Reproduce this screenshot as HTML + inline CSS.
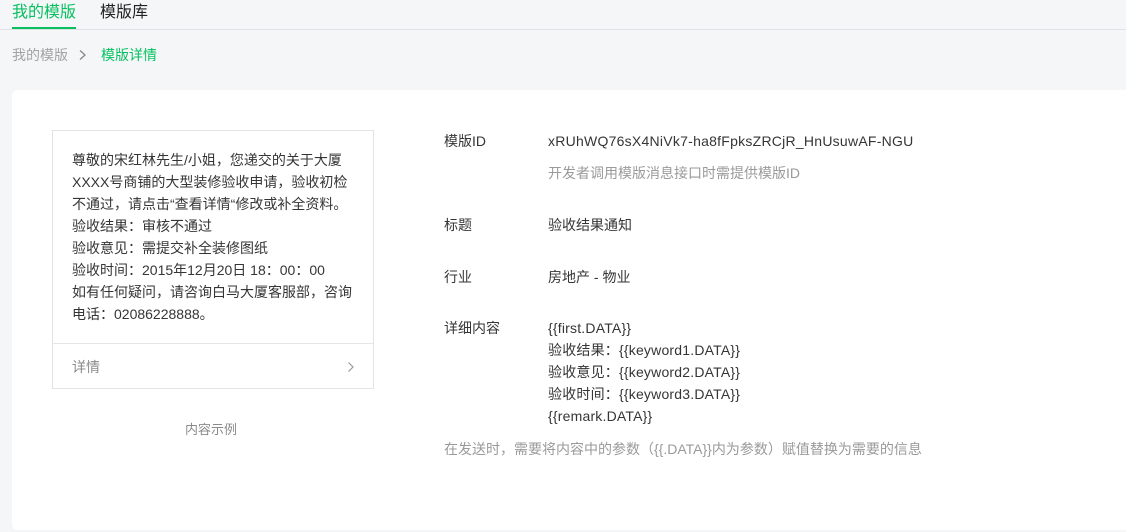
<!DOCTYPE html>
<html><head><meta charset="utf-8"><style>
*{margin:0;padding:0;box-sizing:border-box}
body{width:1126px;height:532px;background:#f5f6f8;font-family:"Liberation Sans","Noto Sans CJK SC",sans-serif;position:relative;overflow:hidden;color:#333}
.abs{position:absolute;white-space:nowrap}
.hdr{position:absolute;left:0;top:29px;width:1126px;height:1px;background:#e0e1e4}
.panel{position:absolute;left:12px;top:90px;width:1130px;height:440px;background:#fff;border-radius:6px}
.card{position:absolute;left:52px;top:130px;width:322px;height:259px;border:1px solid #e3e3e3}
.ct{position:absolute;left:19px;top:18px;font-size:14px;line-height:22px;color:#353535;white-space:nowrap}
.div{position:absolute;left:0;top:212px;width:320px;height:1px;background:#e6e6e6}
.lbl{font-size:14px;color:#353535}
.grey{color:#9a9a9a}
</style></head><body>
<div class="abs" style="left:12px;top:3px;font-size:16px;color:#07c160;line-height:20px">我的模版</div>
<div class="abs" style="left:12px;top:27px;width:64px;height:2px;background:#07c160;z-index:2"></div>
<div class="abs" style="left:100px;top:3px;font-size:16px;color:#222;line-height:20px">模版库</div>
<div class="hdr"></div>
<div class="abs" style="left:12px;top:46px;font-size:14px;color:#a3a3a3;line-height:18px">我的模版</div>
<svg class="abs" style="left:78px;top:49px" width="10" height="12"><path d="M2 1.5 L7 6 L2 10.5" fill="none" stroke="#888" stroke-width="1.3"/></svg>
<div class="abs" style="left:101px;top:46px;font-size:14px;color:#07c160;line-height:18px">模版详情</div>
<div class="panel"></div>
<div class="card">
<div class="ct">尊敬的宋红林先生/小姐，您递交的关于大厦<br>XXXX号商铺的大型装修验收申请，验收初检<br>不通过，请点击“查看详情“修改或补全资料。<br>验收结果：审核不通过<br>验收意见：需提交补全装修图纸<br>验收时间：2015年12月20日 18：00：00<br>如有任何疑问，请咨询白马大厦客服部，咨询<br>电话：02086228888。</div>
<div class="div"></div>
<div class="abs" style="left:19px;top:226px;font-size:14px;color:#8a8a8a;line-height:20px">详情</div>
<svg class="abs" style="left:293px;top:230px" width="10" height="12"><path d="M2.5 1.5 L7 6 L2.5 10.5" fill="none" stroke="#999" stroke-width="1.2"/></svg>
</div>
<div class="abs" style="left:185px;top:421px;font-size:13px;color:#8a8a8a;line-height:18px">内容示例</div>
<div class="abs lbl" style="left:444px;top:131px;line-height:20px">模版ID</div>
<div class="abs lbl" style="left:548px;top:131px;line-height:20px;letter-spacing:0.25px">xRUhWQ76sX4NiVk7-ha8fFpksZRCjR_HnUsuwAF-NGU</div>
<div class="abs lbl grey" style="left:548px;top:163px;line-height:20px;font-size:14px">开发者调用模版消息接口时需提供模版ID</div>
<div class="abs lbl" style="left:444px;top:215px;line-height:20px">标题</div>
<div class="abs lbl" style="left:548px;top:215px;line-height:20px">验收结果通知</div>
<div class="abs lbl" style="left:444px;top:267px;line-height:20px">行业</div>
<div class="abs lbl" style="left:548px;top:267px;line-height:20px">房地产 - 物业</div>
<div class="abs lbl" style="left:444px;top:318px;line-height:20px">详细内容</div>
<div class="abs lbl" style="left:548px;top:317px;line-height:22px;letter-spacing:0.2px">{{first.DATA}}<br>验收结果：{{keyword1.DATA}}<br>验收意见：{{keyword2.DATA}}<br>验收时间：{{keyword3.DATA}}<br>{{remark.DATA}}</div>
<div class="abs lbl grey" style="left:444px;top:439px;line-height:20px">在发送时，需要将内容中的参数（{{.DATA}}内为参数）赋值替换为需要的信息</div>
</body></html>
